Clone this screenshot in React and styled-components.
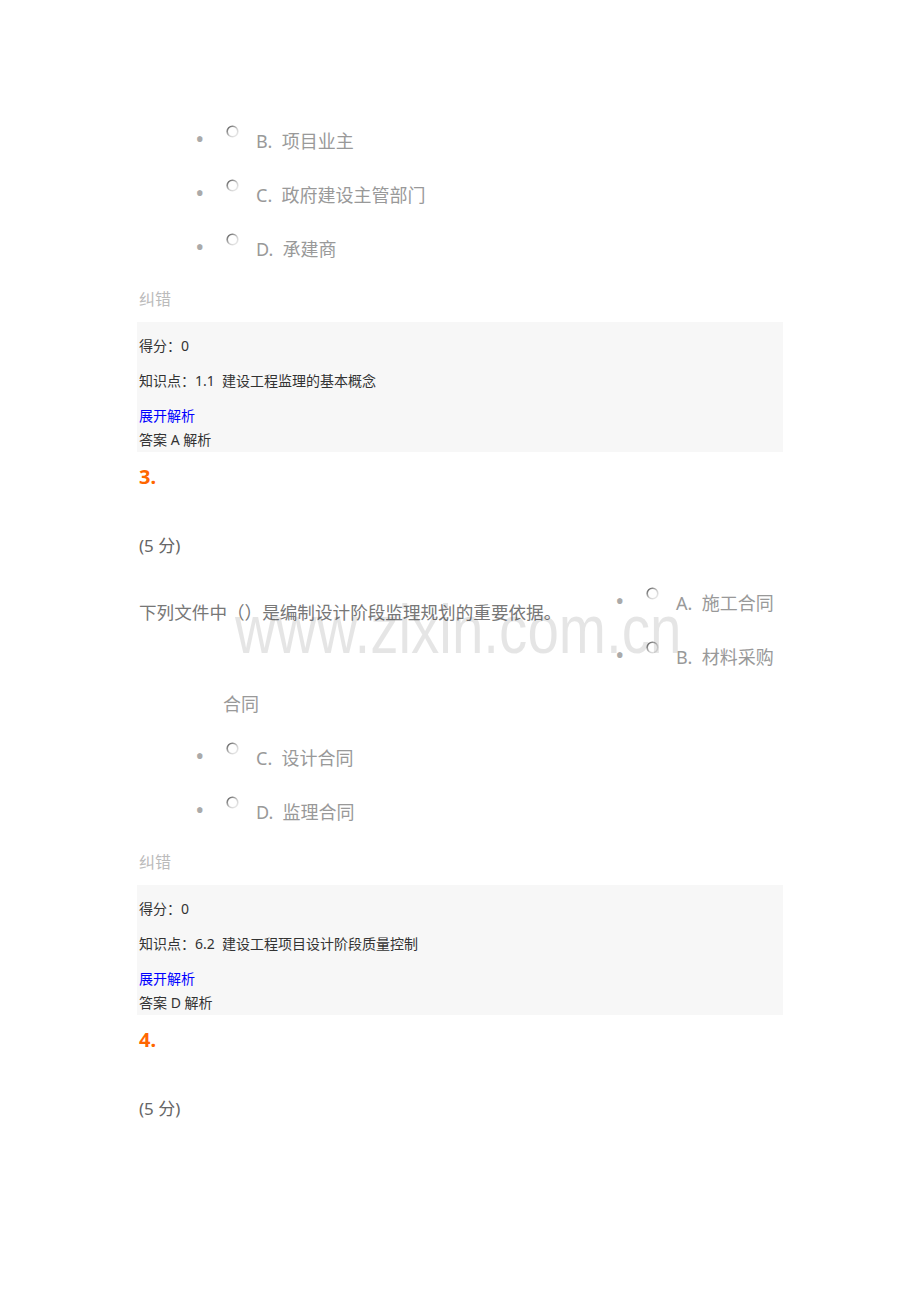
import { useId } from 'react'
import styled, { createGlobalStyle } from 'styled-components'

const GlobalStyle = createGlobalStyle`
  html, body {
    margin: 0;
    padding: 0;
    background: #fff;
  }
  body {
    font-family: 'Noto Sans', 'Noto Sans CJK SC', sans-serif;
  }
`

const Page = styled.div`
  position: relative;
  width: 783px;
  min-height: 1302px;
  box-sizing: border-box;
  padding: 118px 0 0 137px;
`

const OptionList = styled.ul`
  margin: 0;
  padding: 0 0 0 86px;
  list-style: disc;
`

const Option = styled.li`
  font-size: 18px;
  line-height: 47px;
  margin-bottom: 7px;
  color: #999;

  &::marker {
    content: '\\2022\\00a0\\00a0\\00a0';
    font: 24px/30px 'Noto Sans', sans-serif;
    color: #aaa;
  }
`

const RadioIcon = styled.svg`
  display: inline-block;
  width: 13px;
  height: 13px;
  margin: 0 17px 0 3px;
  vertical-align: 10px;
`

const Report = styled.div`
  margin: 14px 0 11px;
  padding-left: 2px;
  font-size: 16px;
  line-height: 24px;
  color: #bbb;
`

const InfoBox = styled.div`
  background: #f7f7f7;
  padding: 12px 2px 0;
  font-size: 14px;
  line-height: 24px;
  color: #333;
`

const InfoLine = styled.p`
  margin: 0 0 ${(p) => (p.$tight ? 0 : 11)}px;
`

const Expand = styled.a`
  color: #00f;
  text-decoration: none;
`

const Number = styled.div`
  margin-top: 11px;
  padding-left: 2px;
  font-size: 20px;
  line-height: 28px;
  font-weight: bold;
  color: #f60;
`

const Score = styled.div`
  margin-top: 41px;
  padding-left: 2px;
  font-size: 17px;
  line-height: 28px;
  color: #666;
`

const Body = styled.div`
  margin-top: 20px;
`

const Stem = styled.div`
  float: left;
  width: 504px;
  padding: 18px 0 30px 2px;
  font-size: 17.6px;
  line-height: 28px;
  color: #777;
`

const Watermark = styled.div`
  position: absolute;
  left: 235px;
  top: 595px;
  font-family: 'Liberation Sans', Arial, sans-serif;
  font-size: 69px;
  line-height: 69px;
  white-space: nowrap;
  color: rgba(0, 0, 0, 0.1);
  transform: scaleX(0.82);
  transform-origin: left top;
  pointer-events: none;
`

const Radio = () => {
  const id = useId()
  return (
    <RadioIcon viewBox="0 0 13 13">
      <defs>
        <linearGradient id={id} x1="0" y1="0" x2="1" y2="1">
          <stop offset="0" stopColor="#555" />
          <stop offset="0.55" stopColor="#ccc" />
          <stop offset="1" stopColor="#f2f2f2" />
        </linearGradient>
      </defs>
      <circle cx="6.5" cy="6.5" r="5.3" fill="#fff" stroke={`url(#${id})`} strokeWidth="1.6" />
    </RadioIcon>
  )
}

const Choices = ({ items }) => (
  <OptionList>
    {items.map((t) => (
      <Option key={t}>
        <Radio />
        {t}
      </Option>
    ))}
  </OptionList>
)

const Analysis = ({ point, answer }) => (
  <>
    <Report>纠错</Report>
    <InfoBox>
      <InfoLine>得分：0</InfoLine>
      <InfoLine>知识点：{point}</InfoLine>
      <InfoLine $tight>
        <Expand href="#">展开解析</Expand>
      </InfoLine>
      <InfoLine $tight>答案 {answer} 解析</InfoLine>
    </InfoBox>
  </>
)

const App = () => {
  return (
    <>
      <GlobalStyle />
      <Page>
        <Choices items={['B.\u00a0\u00a0项目业主', 'C.\u00a0\u00a0政府建设主管部门', 'D.\u00a0\u00a0承建商']} />
        <Analysis point={'1.1\u00a0\u00a0建设工程监理的基本概念'} answer="A" />

        <Number>3.</Number>
        <Score>(5 分)</Score>
        <Body>
          <Stem>下列文件中（）是编制设计阶段监理规划的重要依据。</Stem>
          <Choices
            items={['A.\u00a0\u00a0施工合同', 'B.\u00a0\u00a0材料采购合同', 'C.\u00a0\u00a0设计合同', 'D.\u00a0\u00a0监理合同']}
          />
        </Body>
        <Analysis point={'6.2\u00a0\u00a0建设工程项目设计阶段质量控制'} answer="D" />

        <Number>4.</Number>
        <Score>(5 分)</Score>

        <Watermark>www.zixin.com.cn</Watermark>
      </Page>
    </>
  )
}

export default App
